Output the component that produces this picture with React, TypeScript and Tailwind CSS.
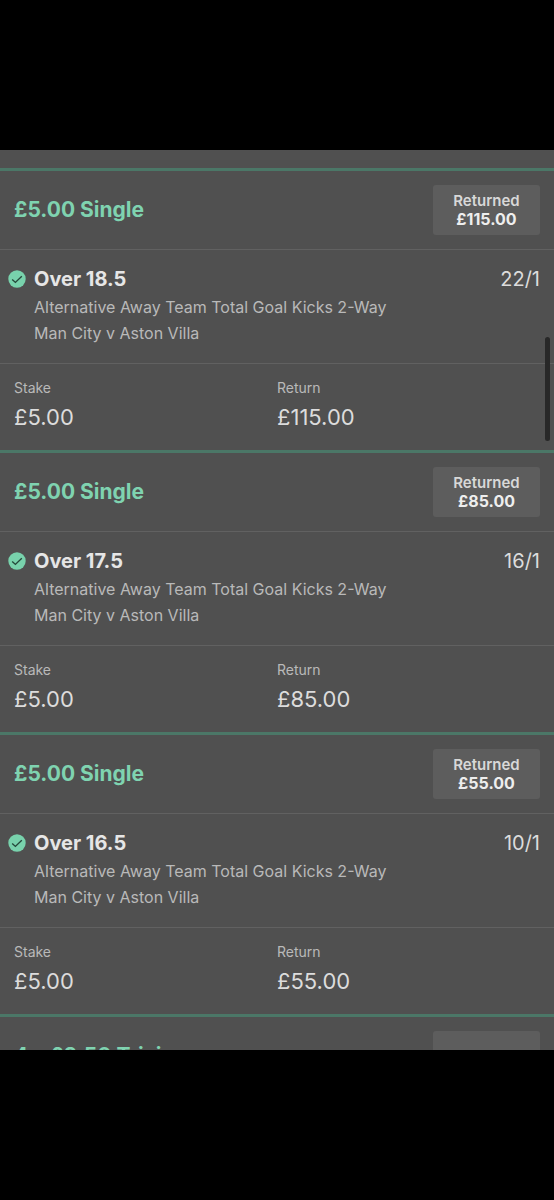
type Bet = {
  id: number;
  title: string;
  returned: string;
  selection: string;
  odds: string;
  market: string;
  fixture: string;
  stake: string;
};

const market = 'Alternative Away Team Total Goal Kicks 2-Way';
const fixture = 'Man City v Aston Villa';

const bets: Bet[] = [
  { id: 1, title: '£5.00 Single', returned: '£115.00', selection: 'Over 18.5', odds: '22/1', market, fixture, stake: '£5.00' },
  { id: 2, title: '£5.00 Single', returned: '£85.00', selection: 'Over 17.5', odds: '16/1', market, fixture, stake: '£5.00' },
  { id: 3, title: '£5.00 Single', returned: '£55.00', selection: 'Over 16.5', odds: '10/1', market, fixture, stake: '£5.00' },
];

const WonIcon = () => (
  <svg viewBox="0 0 18 18" className="h-[18px] w-[18px] shrink-0" role="img" aria-label="Won">
    <circle cx="9" cy="9" r="8.7" fill="#78d2ac" />
    <path d="M4.2 9.4 L7.4 12.4 L13.8 6.2" fill="none" stroke="#25483a" strokeWidth="1.4" />
  </svg>
);

type BetHeaderProps = {
  title: string;
  status: string;
  amount?: string;
};

const BetHeader = ({ title, status, amount }: BetHeaderProps) => (
  <header className="flex h-[79px] items-center justify-between border-b border-[#616161] pr-[14px] pl-[14px]">
    <h2 className="text-[21px] leading-7 font-bold text-[#7fd3b0]">{title}</h2>
    <div className="flex h-[50px] w-[107px] flex-col justify-center rounded-[3px] bg-[#5d5d5d] text-center leading-[18px]">
      <span className="text-[15px] font-semibold text-[#d8d8d8]">{status}</span>
      {amount && <span className="text-base leading-[18px] font-bold text-[#eeeeee]">{amount}</span>}
    </div>
  </header>
);

const BetCard = ({ bet }: { bet: Bet }) => (
  <article className="border-t-[3px] border-[#4b7767]">
    <BetHeader title={bet.title} status="Returned" amount={bet.returned} />

    <div className="flex h-[114px] border-b border-[#616161] pt-[15px] pr-[14px] pl-2">
      <div className="flex h-7 w-[26px] shrink-0 items-center">
        <WonIcon />
      </div>
      <div className="min-w-0 flex-1">
        <div className="flex justify-between pb-px text-xl leading-7">
          <h3 className="font-bold text-[#e6e6e6]">{bet.selection}</h3>
          <span className="text-[#dcdcdc]">{bet.odds}</span>
        </div>
        <p className="text-base leading-[26px] text-[#b9b9b9]">{bet.market}</p>
        <p className="text-base leading-[26px] text-[#b9b9b9]">{bet.fixture}</p>
      </div>
    </div>

    <dl className="grid h-[86px] grid-cols-2 pt-[14px]">
      <div className="pl-[14px]">
        <dt className="text-sm leading-5 text-[#b9b9b9]">Stake</dt>
        <dd className="pt-[3px] text-[22px] leading-8 text-[#dcdcdc]">{bet.stake}</dd>
      </div>
      <div>
        <dt className="text-sm leading-5 text-[#b9b9b9]">Return</dt>
        <dd className="pt-[3px] text-[22px] leading-8 text-[#dcdcdc]">{bet.returned}</dd>
      </div>
    </dl>
  </article>
);

export default function App() {
  return (
    <div className="h-screen bg-black pt-[150px] pb-[150px] font-['Inter',sans-serif]">
      <main className="relative h-full overflow-hidden bg-[#505050] pt-[18px]">
        {bets.map(bet => (
          <BetCard key={bet.id} bet={bet} />
        ))}
        <article className="border-t-[3px] border-[#4b7767]">
          <BetHeader title="4 x £2.50 Trixie" status="Lost" />
        </article>

        {/* scroll indicator */}
        <div className="absolute top-[187px] right-1 h-[104px] w-[5px] rounded-full bg-[#282828]" />
      </main>
    </div>
  );
}
